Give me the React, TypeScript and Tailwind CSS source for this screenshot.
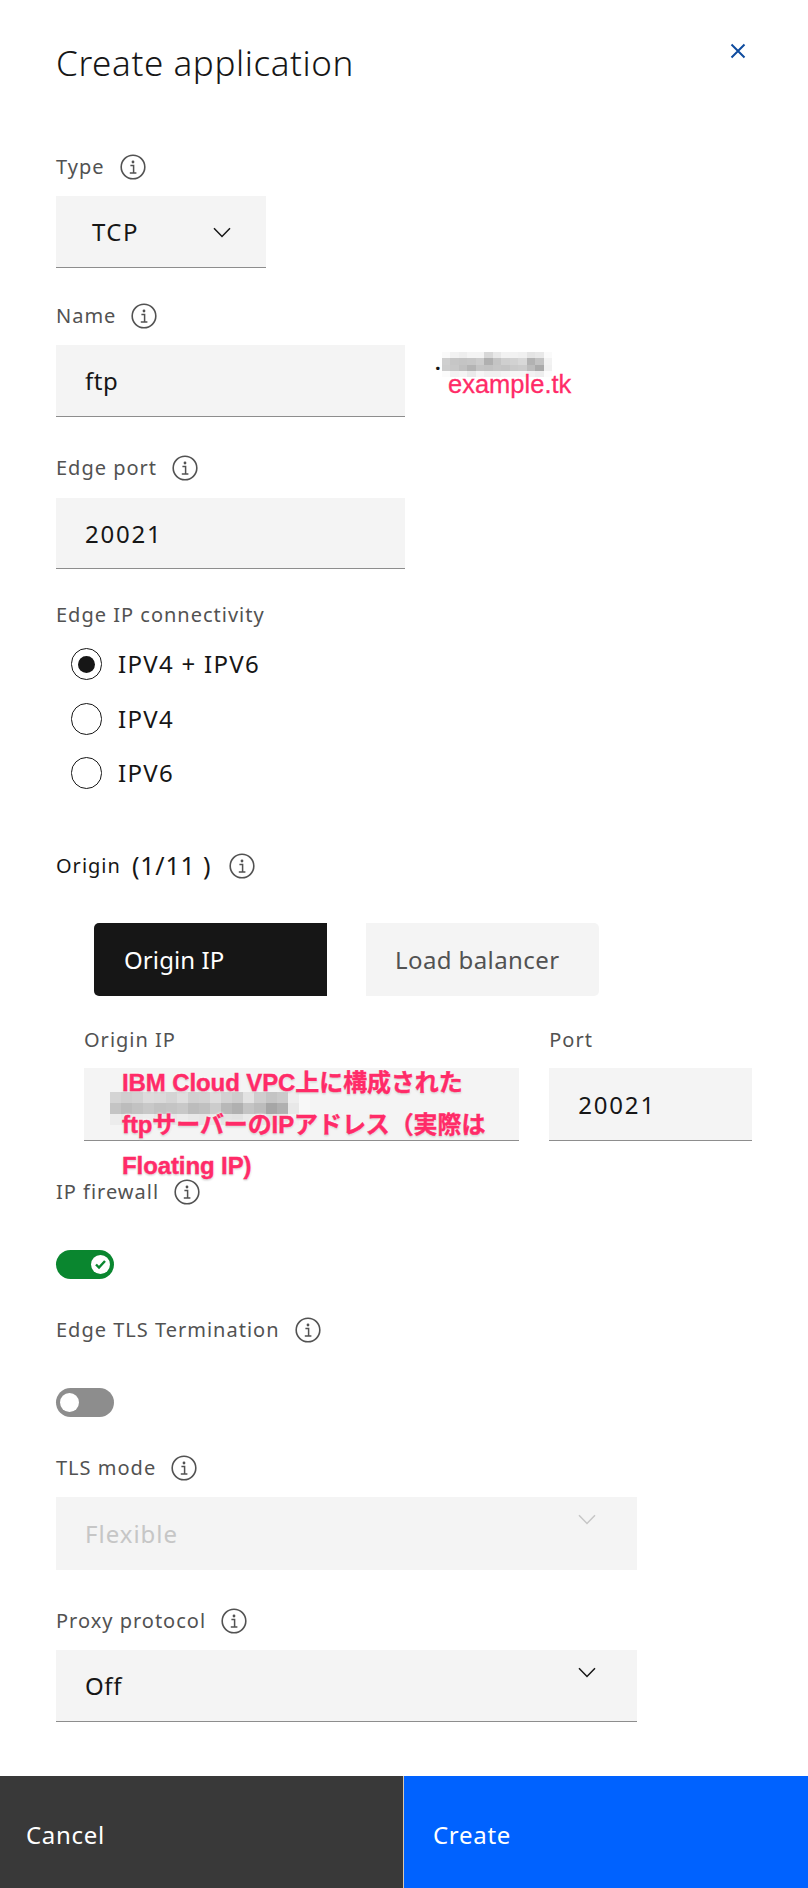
const PLEX = "font-['Noto_Sans','Noto_Sans_CJK_JP',sans-serif]";

function Info() {
  return (
    <svg width="26" height="26" viewBox="0 0 26 26" fill="none" className="shrink-0 text-[#525252]">
      <circle cx="13" cy="13" r="11.8" stroke="currentColor" strokeWidth="1.6" />
      <circle cx="13" cy="8" r="1.4" fill="currentColor" />
      <path d="M10.4 11.4h3.2v7.5M9.8 19h6.6" stroke="currentColor" strokeWidth="1.5" />
    </svg>
  );
}

function Chevron({ color = "#161616" }: { color?: string }) {
  return (
    <svg width="18" height="11" viewBox="0 0 18 11" fill="none">
      <path d="M1 1.2 9 9.4l8-8.2" stroke={color} strokeWidth="1.5" />
    </svg>
  );
}

function Label({ text, info = true }: { text: string; info?: boolean }) {
  return (
    <div className="flex h-[24px] items-center gap-[15px] text-[20px] leading-[24px] tracking-[1px] text-[#525252]">
      <span>{text}</span>
      {info && <Info />}
    </div>
  );
}

function Field({ value, className }: { value: string; className: string }) {
  return (
    <div className={`flex items-center border-b border-[#8d8d8d] bg-[#f4f4f4] pl-[29px] pt-[1px] text-[24px] text-[#161616] ${className}`}>
      {value}
    </div>
  );
}

function Radio({ label, checked }: { label: string; checked?: boolean }) {
  return (
    <div className="flex h-[32px] items-center gap-[16px] pl-[15px]">
      <div className="flex h-[32px] w-[31px] items-center justify-center rounded-full border border-[#161616]">
        {checked && <div className="h-[17px] w-[17px] rounded-full bg-[#161616]" />}
      </div>
      <span className="text-[24px] leading-[32px] tracking-[1.3px] text-[#161616]">{label}</span>
    </div>
  );
}

function Toggle({ on }: { on?: boolean }) {
  return (
    <div className={`flex h-[29px] w-[58px] items-center rounded-full px-[4px] ${on ? "justify-end bg-[#0a862f]" : "justify-start bg-[#8d8d8d]"}`}>
      <div className="flex h-[19px] w-[19px] items-center justify-center rounded-full bg-white">
        {on && (
          <svg width="13" height="11" viewBox="0 0 13 11" fill="none">
            <path d="M2 5.5 5 8.6 11 2" stroke="#0a862f" strokeWidth="2.4" />
          </svg>
        )}
      </div>
    </div>
  );
}

const mosaicIp = [
  "#d4d4d4 #cfcfcf #d2d2d2 #dcdcdc #dadada #d4d4d4 #dedede #d0d0d0 #d2d2d2 #dddddd #d2d2d2 #cccccc #e2e2e2 #cecece #c4c4c4 #cacaca #eeeeee #f8f8f8",
  "#c4c4c4 #bcbcbc #c2c2c2 #c8c8c8 #c2c2c2 #c4c4c4 #c8c8c8 #bcbcbc #c0c0c0 #cccccc #b8b8b8 #b0b0b0 #c4c4c4 #bcbcbc #a6a6a6 #b0b0b0 #e8e8e8 #f8f8f8",
  "#ececec #e8e8e8 #ececec #eeeeee #e8e8e8 #e8e8e8 #ececec #e8e8e8 #e6e6e6 #eaeaea #e4e4e4 #e2e2e2 #eaeaea #e8e8e8 #e2e2e2 #e6e6e6 #f2f2f2 #f6f6f6",
];

const mosaicDomain = [
  "#fafafa #f2f2f2 #eeeeee #f4f4f4 #f4f4f4 #d8d8d8 #e8e8e8 #f2f2f2 #f2f2f2 #f0f0f0 #e4e4e4 #e8e8e8 #fafafa",
  "#cfcfcf #c6c6c6 #c4c4c4 #c6c6c6 #cccccc #b0b0b0 #c4c4c4 #cfcfcf #d2d2d2 #d8d8d8 #b2b2b2 #c2c2c2 #f2f2f2",
  "#cdcdcd #c8c8c8 #c0c0c0 #b4b4b4 #c4c4c4 #c2c2c2 #c6c6c6 #c4c4c4 #cacaca #cccccc #bcbcbc #aaaaaa #f0f0f0",
  "#fbfbfb #f2f2f2 #f4f4f4 #eaeaea #f6f6f6 #f0f0f0 #f0f0f0 #f4f4f4 #f6f6f6 #f6f6f6 #f2f2f2 #eeeeee #fcfcfc",
];

function Mosaic({ data, width, height }: { data: string[]; width: number; height: number }) {
  const rows = data.map((r) => r.split(" "));
  const cols = rows[0].length;
  return (
    <svg width={width} height={height} viewBox={`0 0 ${cols} ${rows.length}`} preserveAspectRatio="none" shapeRendering="crispEdges">
      {rows.map((r, y) => r.map((c, x) => <rect key={`${x}-${y}`} x={x} y={y} width="1" height="1" fill={c} />))}
    </svg>
  );
}

export default function App() {
  const ann = "font-['Liberation_Sans','Noto_Sans_CJK_JP',sans-serif] text-[#ff2b68]";
  return (
    <div className={`relative flex h-[1888px] w-[808px] flex-col overflow-hidden bg-white ${PLEX}`}>
      <div className="flex-1 px-[56px] pt-[44px]">
        {/* header */}
        <div className="mb-[73px] flex h-[38px] items-start justify-between pr-[6px]">
          <h1 className="text-[35px] font-light leading-[38px] tracking-[0.6px] text-[#161616]">Create application</h1>
          <svg width="16" height="16" viewBox="0 0 16 16" fill="none" className="mt-[-1px]">
            <path d="M1.5 1.5l13 13M14.5 1.5l-13 13" stroke="#0f4c9f" strokeWidth="2" />
          </svg>
        </div>

        <Label text="Type" />
        <div className="mt-[17px] flex h-[72px] w-[210px] items-center justify-between border-b border-[#8d8d8d] bg-[#f4f4f4] pl-[36px] pr-[35px] pt-[1px] text-[24px] tracking-[1.5px] text-[#161616]">
          TCP
          <Chevron />
        </div>

        <div className="mt-[36px]">
          <Label text="Name" />
        </div>
        <div className="mt-[17px] flex items-start">
          <Field value="ftp" className="h-[72px] w-[349px] tracking-[0.5px]" />
          <span className="ml-[30px] mt-[9px] text-[20px] font-bold leading-[18px] text-[#161616]">.</span>
        </div>

        <div className="mt-[39px]">
          <Label text="Edge port" />
        </div>
        <Field value="20021" className="mt-[18px] h-[71px] w-[349px] tracking-[1.8px]" />

        <div className="mt-[34px]">
          <Label text="Edge IP connectivity" info={false} />
        </div>
        <div className="mt-[21px] flex flex-col gap-[22.5px]">
          <Radio label="IPV4 + IPV6" checked />
          <Radio label="IPV4" />
          <Radio label="IPV6" />
        </div>

        <div className="mt-[61px] flex h-[32px] items-center text-[20px] tracking-[1px] text-[#161616]">
          <span>Origin</span>
          <span className="ml-[11px] text-[25px] tracking-[0.8px]">(1/11 )</span>
          <span className="ml-[18px]">
            <Info />
          </span>
        </div>

        <div className="ml-[38px] mt-[41px] flex gap-[39px]">
          <div className="flex h-[73px] w-[233px] items-center rounded-l-[5px] bg-[#161616] pl-[30px] text-[24px] tracking-[0.1px] text-white">Origin IP</div>
          <div className="flex h-[73px] w-[233px] items-center rounded-r-[5px] bg-[#f4f4f4] pl-[29px] text-[24px] tracking-[0.4px] text-[#525252]">Load balancer</div>
        </div>

        <div className="ml-[28px] mt-[32px] flex gap-[30px]">
          <div className="w-[438px]">
            <Label text="Origin IP" info={false} />
            <div className="mt-[16px] h-[73px] border-b border-[#8d8d8d] bg-[#f4f4f4]" />
          </div>
          <div className="w-[204px]">
            <Label text="Port" info={false} />
            <Field value="20021" className="mt-[16px] h-[73px] tracking-[1.8px]" />
          </div>
        </div>

        <div className="mt-[39px]">
          <Label text="IP firewall" />
        </div>
        <div className="mt-[46px]">
          <Toggle on />
        </div>

        <div className="mt-[39px]">
          <Label text="Edge TLS Termination" />
        </div>
        <div className="mt-[46px]">
          <Toggle />
        </div>

        <div className="mt-[39px]">
          <Label text="TLS mode" />
        </div>
        <div className="relative mt-[17px] flex h-[73px] w-[581px] items-center bg-[#f4f4f4] pl-[29px] pt-[1px] text-[24px] tracking-[1px] text-[#c6c6c6]">
          Flexible
          <div className="absolute right-[41px] top-[17px]">
            <Chevron color="#c6c6c6" />
          </div>
        </div>

        <div className="mt-[39px]">
          <Label text="Proxy protocol" />
        </div>
        <div className="relative mt-[17px] flex h-[72px] w-[581px] items-center border-b border-[#8d8d8d] bg-[#f4f4f4] pl-[29px] pt-[1px] text-[24px] tracking-[0.6px] text-[#161616]">
          Off
          <div className="absolute right-[41px] top-[17px]">
            <Chevron />
          </div>
        </div>
      </div>

      {/* footer */}
      <div className="flex h-[112px] text-[24px] tracking-[0.7px] text-white">
        <div className="w-[404px] border-r border-[#d9c7ae] bg-[#393939] pl-[26px] pt-[44px] leading-[30px]">Cancel</div>
        <div className="flex-1 bg-[#0062ff] pl-[29px] pt-[44px] leading-[30px]">Create</div>
      </div>

      {/* screenshot annotations */}
      <div className="absolute left-[442px] top-[352px]">
        <Mosaic data={mosaicDomain} width={110} height={25} />
      </div>
      <div className={`absolute left-[448px] top-[369px] text-[25.5px] leading-[30px] [-webkit-text-stroke:0.3px_#ff2b68] ${ann}`}>example.tk</div>
      <div className="absolute left-[110px] top-[1092px]">
        <Mosaic data={mosaicIp} width={200} height={33} />
      </div>
      <div className={`absolute left-[122px] top-[1062px] w-[380px] text-[24px] font-bold leading-[41.5px] tracking-[-0.1px] [-webkit-text-stroke:0.4px_#ff2b68] ${ann} [text-shadow:0_0_3px_#fff,0_0_3px_#fff,0_1px_2px_#999]`}>
        IBM Cloud VPC上に構成された
        <br />
        ftpサーバーのIPアドレス（実際は
        <br />
        Floating IP)
      </div>
    </div>
  );
}
